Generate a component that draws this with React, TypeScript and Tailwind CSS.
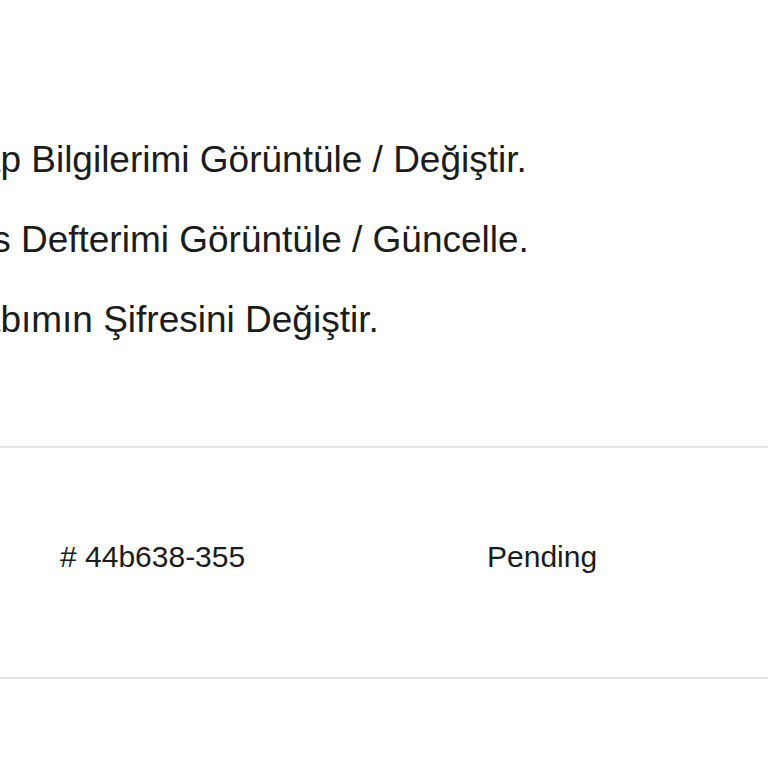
import React from 'react';

const links = [
  'Hesap Bilgilerimi Görüntüle / Değiştir.',
  'Adres Defterimi Görüntüle / Güncelle.',
  'Hesabımın Şifresini Değiştir.',
];

export default function App() {
  return (
    <div className="w-[768px] h-[768px] overflow-hidden bg-white text-[#1c1c1c] font-['Liberation_Sans',Arial,sans-serif]">
      <ul className="pt-[120px] ml-[-86px] text-[37px] leading-[80px]">
        {links.map((l) => (
          <li key={l} className="whitespace-nowrap">{l}</li>
        ))}
      </ul>
      <div className="mt-[86px] border-t-2 border-b-2 border-[#e6e6e6]">
        <div className="flex items-center h-[229px] pb-3 text-[30px]">
          <div className="w-[487px] pl-[60px]">{'# 44b638-355'}</div>
          <div>Pending</div>
        </div>
      </div>
    </div>
  );
}
